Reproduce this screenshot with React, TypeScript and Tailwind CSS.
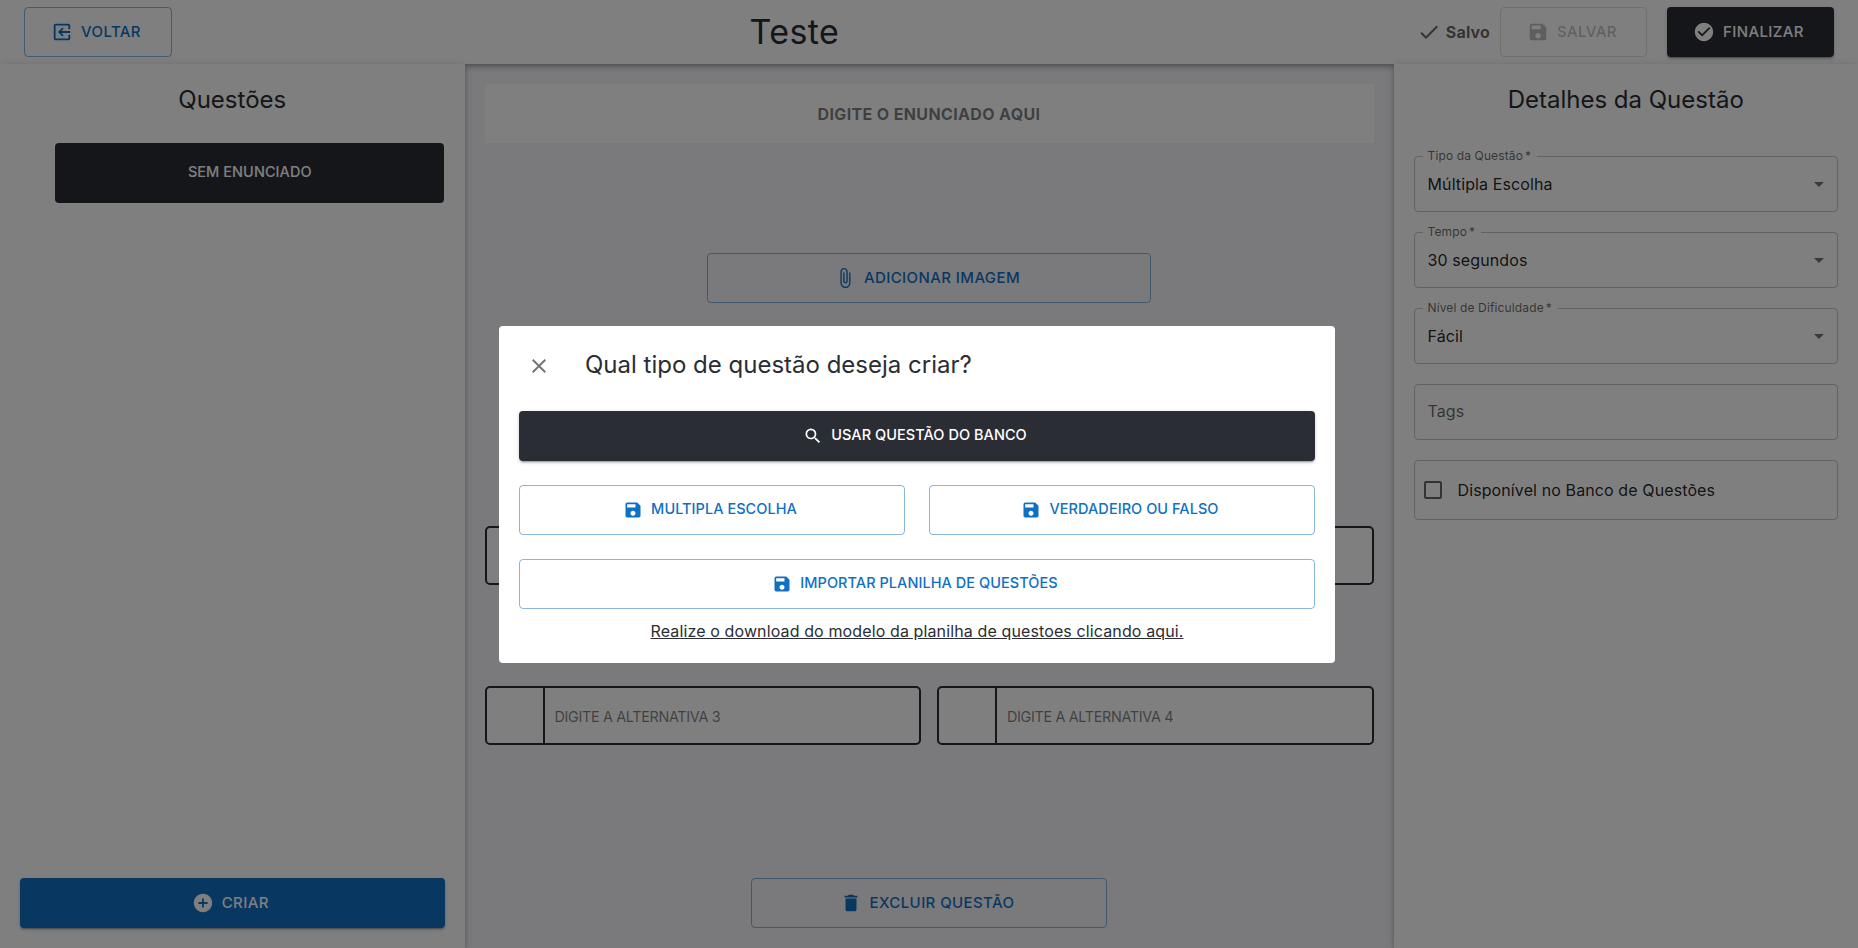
import React from "react";
import {
  MdAddCircle,
  MdArrowDropDown,
  MdAttachFile,
  MdCheck,
  MdCheckBoxOutlineBlank,
  MdCheckCircle,
  MdClose,
  MdDelete,
  MdExitToApp,
  MdSave,
  MdSearch,
} from "react-icons/md";

const raised =
  "shadow-[0px_3px_1px_-2px_rgba(0,0,0,0.2),0px_2px_2px_0px_rgba(0,0,0,0.14),0px_1px_5px_0px_rgba(0,0,0,0.12)]";
const paper =
  "shadow-[0px_2px_4px_-1px_rgba(0,0,0,0.2),0px_4px_5px_0px_rgba(0,0,0,0.14),0px_1px_10px_0px_rgba(0,0,0,0.12)]";

const variants = {
  outlined: "border border-[#1070c4]/50 text-[#1070c4]",
  dark: `bg-[#2b2d35] text-white ${raised}`,
  blue: `bg-[#1070c4] text-white ${raised}`,
  disabled: "border border-black/[0.12] text-black/[0.26]",
};

const sizes = {
  large: "text-[15px] tracking-[0.4px]",
  medium: "pb-[2px] text-[14.5px] tracking-[0.05px]",
};

type ButtonProps = {
  variant: keyof typeof variants;
  size?: keyof typeof sizes;
  className?: string;
  icon?: React.ReactNode;
  children: React.ReactNode;
};

function Button({ variant, size = "large", className = "", icon, children }: ButtonProps) {
  return (
    <button
      className={`flex h-[50px] items-center justify-center rounded font-medium uppercase ${sizes[size]} ${variants[variant]} ${className}`}
    >
      {icon && <span className="-ml-1 mr-2 flex">{icon}</span>}
      {children}
    </button>
  );
}

function Select({ label, value }: { label: string; value: string }) {
  return (
    <div className="relative flex h-14 items-center justify-between rounded border border-black/[0.23] pl-[13px] pr-[6px]">
      <span className="absolute -top-[9px] left-2 flex gap-[2px] bg-white pl-[5px] pr-[6px] text-xs leading-4 tracking-[0.13px] text-black/60">
        {label}
        <span>*</span>
      </span>
      <span className="text-base tracking-[0.11px] text-black/[0.87]">{value}</span>
      <MdArrowDropDown size={24} className="text-black/[0.54]" />
    </div>
  );
}

function Alternative({ text }: { text: string }) {
  return (
    <div className="flex h-[59px] flex-1 rounded-[5px] border-2 border-[#2b2d35] bg-white">
      <div className="w-[58px] border-r-2 border-[#2b2d35]" />
      <div className="flex items-center pl-[10px] pt-[2px] text-[14.4px] tracking-[-0.34px] text-black/50">{text}</div>
    </div>
  );
}

function Header() {
  return (
    <header className={`relative flex h-16 shrink-0 items-center justify-between bg-white px-6 ${paper}`}>
      <Button variant="outlined" className="w-[148px]" icon={<MdExitToApp size={22} className="-scale-x-100" />}>
        Voltar
      </Button>
      <h1 className="text-[34px] leading-[42px] tracking-[0.4px]">Teste</h1>
      <div className="flex items-center">
        <MdCheck size={24} className="mr-[5px] text-black/60" />
        <span className="mr-[10px] text-base font-bold tracking-[0.15px] text-black/60">Salvo</span>
        <Button variant="disabled" className="mr-5 w-[147px] pl-[1px]" icon={<MdSave size={22} />}>
          Salvar
        </Button>
        <Button variant="dark" className="w-[167px]" icon={<MdCheckCircle size={22} />}>
          Finalizar
        </Button>
      </div>
    </header>
  );
}

function QuestionList() {
  return (
    <aside className={`relative flex flex-col bg-white px-5 pb-5 pt-5 ${paper}`}>
      <h2 className="text-center text-2xl leading-8">Questões</h2>
      <button className="ml-[35px] mr-px mt-[27px] h-[60px] rounded bg-[#2b2d35] pb-[3px] pl-px text-[14.5px] font-medium tracking-[0.05px] text-white">
        SEM ENUNCIADO
      </button>
      <Button variant="blue" className="mt-auto" icon={<MdAddCircle size={22} />}>
        Criar
      </Button>
    </aside>
  );
}

function Editor() {
  return (
    <main className="flex flex-col items-center bg-[#f5f5fa] p-5">
      <div className="flex h-[59px] w-full items-center justify-center bg-white text-base font-bold tracking-[0.36px] text-black/50">
        DIGITE O ENUNCIADO AQUI
      </div>
      <Button variant="outlined" className="mt-[110px] w-1/2" icon={<MdAttachFile size={22} />}>
        Adicionar imagem
      </Button>
      <div className="mt-[223px] flex w-full gap-4">
        <Alternative text="DIGITE A ALTERNATIVA 1" />
        <Alternative text="DIGITE A ALTERNATIVA 2" />
      </div>
      <div className="mt-[101px] flex w-full gap-4">
        <Alternative text="DIGITE A ALTERNATIVA 3" />
        <Alternative text="DIGITE A ALTERNATIVA 4" />
      </div>
      <Button variant="outlined" className="mt-auto w-2/5" icon={<MdDelete size={22} />}>
        Excluir questão
      </Button>
    </main>
  );
}

function Details() {
  return (
    <aside className={`relative flex flex-col gap-5 bg-white px-5 pt-5 ${paper}`}>
      <h2 className="mb-5 text-center text-2xl leading-8">Detalhes da Questão</h2>
      <Select label="Tipo da Questão" value="Múltipla Escolha" />
      <Select label="Tempo" value="30 segundos" />
      <Select label="Nível de Dificuldade" value="Fácil" />
      <div className="flex h-14 items-center rounded border border-black/[0.23] pb-[2px] pl-[13px] text-base tracking-[0.11px] text-black/60">
        Tags
      </div>
      <div className="flex h-[60px] items-center rounded border border-black/[0.23] pl-[6px] text-base tracking-[0.11px] text-black/[0.87]">
        <MdCheckBoxOutlineBlank size={24} className="mr-[13px] text-black/60" />
        Disponível no Banco de Questões
      </div>
    </aside>
  );
}

function CreateDialog() {
  const save = <MdSave size={20} className="mt-[2px]" />;
  return (
    <div className="absolute left-[499px] top-[326px] flex h-[337px] w-[836px] flex-col rounded bg-white px-5 pt-5">
      <div className="flex h-10 items-center">
        <MdClose size={24} className="ml-2 text-black/[0.54]" />
        <h2 className="ml-[34px] pb-[2px] text-2xl leading-8">Qual tipo de questão deseja criar?</h2>
      </div>
      <Button variant="dark" size="medium" className="mt-[25px] w-full" icon={<MdSearch size={20} className="mt-[2px]" />}>
        Usar questão do banco
      </Button>
      <div className="mt-6 flex gap-6">
        <Button variant="outlined" size="medium" className="flex-1" icon={save}>
          Multipla escolha
        </Button>
        <Button variant="outlined" size="medium" className="flex-1" icon={save}>
          Verdadeiro ou falso
        </Button>
      </div>
      <Button variant="outlined" size="medium" className="mt-6 w-full" icon={save}>
        Importar planilha de questões
      </Button>
      <a className="mt-[10px] self-center text-base tracking-[0.12px] underline">
        Realize o download do modelo da planilha de questoes clicando aqui.
      </a>
    </div>
  );
}

export default function App() {
  return (
    <div className="relative flex h-screen flex-col overflow-hidden font-[Inter,sans-serif] text-[#2b2d35]">
      <Header />
      <div className="grid min-h-0 flex-1 grid-cols-[1fr_2fr_1fr]">
        <QuestionList />
        <Editor />
        <Details />
      </div>
      <div className="absolute inset-0 bg-black/50">
        <CreateDialog />
      </div>
    </div>
  );
}
